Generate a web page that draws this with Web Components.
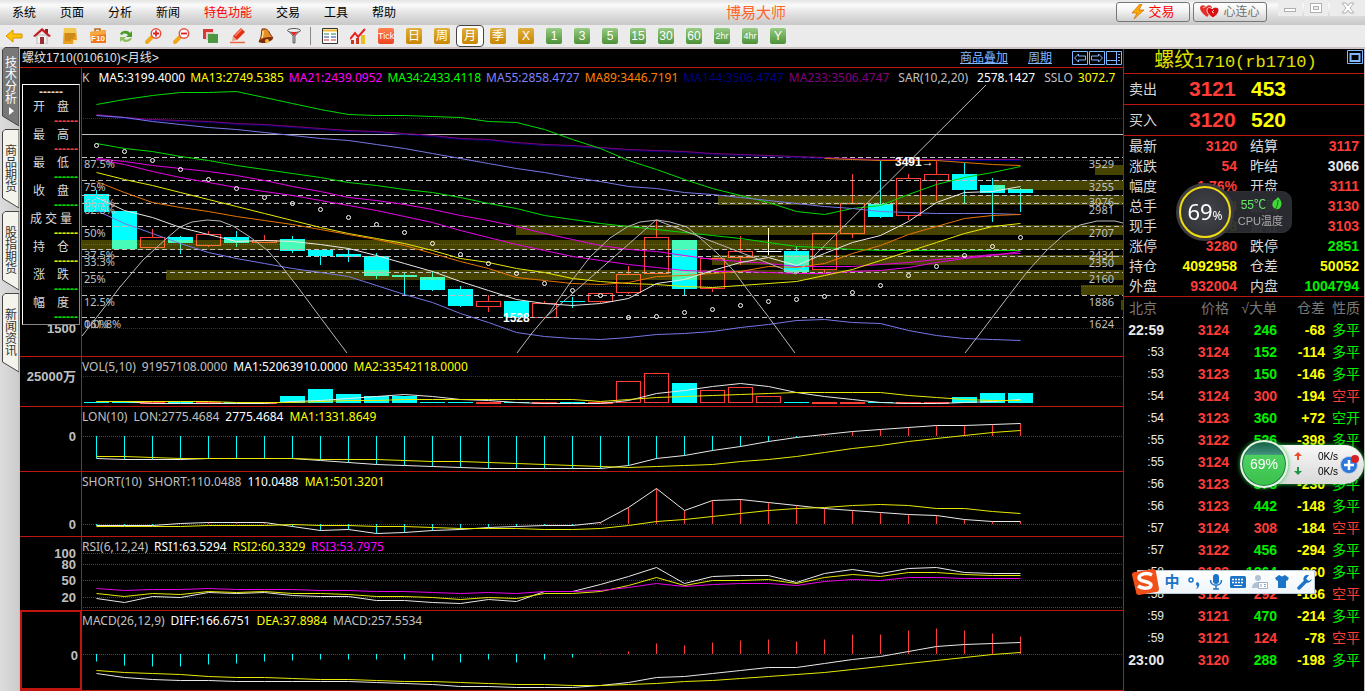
<!DOCTYPE html>
<html lang="zh-CN">
<head>
<meta charset="utf-8">
<title>博易大师</title>
<style>
  body {
    margin: 0;
    background: #000;
    font: 12px/16px "Liberation Sans", "Noto Sans CJK SC", sans-serif;
  }
</style>
</head>
<body>
<trade-app></trade-app>

<script>
const Color = {
  WHITE: "#e8e8e8",
  YELLOW: "#e8e800",
  MAGENTA: "#e800e8",
  GREEN: "#00dc00",
  VIOLET: "#7676e8",
  ORANGE: "#e87400",
  PURPLE: "#800080",
  NAVY: "#000080",
  UP: "#ff3c38",
  DOWN: "#00ffff",
  GRID: "#c01410",
  DIM_GRID: "#900c0c",
  LABEL: "#c0c0c0",
};

const BAR_STEP = 28;
const BAR_OFFSET = 14;
const BODY_WIDTH = 25;

const barX = (i) => BAR_OFFSET + i * BAR_STEP + 0.5;

const drawLine = (values, color, start = 0) => {
  const points = values.map((y, i) => `${barX(i + start)},${y + 0.5}`).join(" ");
  return `<polyline points="${points}" fill="none" stroke="${color}"/>`;
};

const drawPath = (points) =>
  `<polyline points="${points}" fill="none" stroke="#b8b8b8"/>`;

const drawDotted = (levels, color) =>
  levels
    .map(
      (y) =>
        `<line x1="1" x2="100%" y1="${y + 0.5}" y2="${y + 0.5}" stroke="${color}" stroke-dasharray="1 1"/>`
    )
    .join("");

const drawBody = (i, kind, top, bottom) => {
  const left = barX(i) - 12.5;
  if (kind === "d") {
    return `<rect x="${left}" y="${top}" width="${BODY_WIDTH}" height="${Math.max(bottom - top, 1)}" fill="${Color.DOWN}"/>`;
  }
  return `<rect x="${left + 0.5}" y="${top + 0.5}" width="${BODY_WIDTH - 1}" height="${Math.max(bottom - top - 1, 1)}" fill="none" stroke="${Color.UP}"/>`;
};

const drawWick = (i, kind, from, to) =>
  `<line x1="${barX(i)}" x2="${barX(i)}" y1="${from}" y2="${to}" stroke="${kind === "d" ? Color.DOWN : Color.UP}"/>`;

const drawCandle = ([kind, top, bottom, high, low], i) => {
  if (kind === "w") {
    return `<path d="M${barX(i) - 12} ${top + 0.5}h25M${barX(i)} ${high}V${low}" stroke="#fff"/>`;
  }
  return (
    drawWick(i, kind, high, top) +
    drawWick(i, kind, bottom, low) +
    drawBody(i, kind, top, bottom)
  );
};

// bars that hang from (or stand on) the zero line of a panel
const drawSticks = (values, zero) =>
  values
    .map((y, i) => drawWick(i, y > zero ? "d" : "u", zero, y + 0.5))
    .join("");

const CANDLES = [
  ["d", 126, 144, 122, 144], ["d", 143, 181, 143, 181], ["u", 169, 180, 161, 180],
  ["d", 169, 175, 168, 186], ["u", 166, 178, 163, 179], ["d", 169, 175, 163, 179],
  ["u", 172, 175, 167, 175], ["d", 171, 183, 168, 185], ["d", 182, 188, 182, 197],
  ["d", 186, 189, 180, 194], ["d", 188, 208, 185, 211], ["d", 207, 209, 205, 228],
  ["d", 209, 222, 203, 223], ["d", 221, 238, 218, 239], ["u", 233, 239, 227, 244],
  ["d", 233, 249, 233, 249], ["u", 235, 250, 233, 250], ["d", 233, 234, 229, 240],
  ["u", 225, 234, 225, 235], ["u", 206, 225, 198, 226], ["u", 169, 206, 152, 206],
  ["d", 172, 221, 172, 228], ["u", 190, 221, 190, 224], ["u", 183, 190, 168, 197],
  ["w", 183, 183, 160, 187], ["d", 183, 204, 178, 205], ["u", 165, 202, 165, 205],
  ["u", 135, 166, 106, 170], ["d", 136, 149, 92, 150], ["u", 110, 148, 106, 152],
  ["u", 106, 113, 92, 133], ["d", 106, 122, 95, 135], ["d", 117, 125, 110, 154],
  ["d", 121, 125, 120, 144],
];

const SAR = [
  77, 83, 92, 101, 111, 120, 129, 135, 141, 149, 156, 164, 175, 186, 195, 205, 215,
  222, 227, 249, 248, 244, 241, 237, 233, 231, 228, 224, 217, 207, 198, 187, 178, 169,
];

const MA_LONG = [
  46, 49, 51, 52, 53, 55, 56, 58, 60, 62, 63, 65, 67, 70, 71, 74, 76, 77, 79, 81, 82,
  83, 85, 86, 87, 88, 89, 90, 91, 91, 91, 91, 91, 91,
];

const MAIN_LINES = [
  [Color.NAVY, MA_LONG.map((y) => y + 1)],
  [Color.PURPLE, MA_LONG],
  [Color.GREEN, [36, 31, 27, 24, 24, 23, 29, 35, 41, 46, 47, 47, 48, 49, 53, 54, 61, 71, 80, 92, 101, 111, 120, 127, 134, 143, 146, 140, 137, 126, 116, 109, 104, 98]],
  [Color.VIOLET, [47, 49, 53, 56, 59, 61, 64, 67, 70, 72, 76, 80, 85, 90, 95, 100, 104, 109, 113, 118, 120, 124, 126, 129, 132, 135, 138, 140, 143, 144, 145, 145, 145, 146]],
  [Color.GREEN, [75, 80, 83, 88, 92, 97, 101, 105, 109, 114, 117, 121, 124, 129, 135, 140, 147, 151, 155, 158, 161, 164, 167, 170, 174, 178, 179, 181, 182, 182, 182, 182, 182, 182]],
  [Color.MAGENTA, [90, 93, 97, 100, 103, 107, 112, 118, 123, 129, 132, 136, 141, 147, 152, 158, 165, 171, 177, 181, 183, 187, 191, 193, 195, 198, 198, 198, 196, 194, 191, 189, 186, 185]],
  [Color.MAGENTA, [91, 96, 103, 109, 114, 119, 123, 127, 132, 137, 142, 148, 154, 162, 169, 176, 182, 188, 192, 196, 199, 202, 203, 203, 204, 205, 205, 203, 202, 199, 194, 190, 187, 183]],
  [Color.YELLOW, [104, 111, 117, 124, 131, 138, 145, 152, 159, 165, 170, 175, 182, 190, 194, 200, 204, 210, 213, 215, 216, 218, 219, 217, 215, 213, 207, 201, 192, 183, 174, 165, 158, 155]],
  [Color.ORANGE, [113, 124, 134, 139, 143, 148, 152, 156, 161, 166, 171, 177, 185, 193, 200, 209, 212, 215, 216, 214, 208, 207, 205, 203, 198, 199, 195, 185, 177, 166, 158, 150, 147, 146]],
  [Color.WHITE, [129, 142, 149, 159, 166, 173, 172, 173, 176, 180, 187, 195, 203, 213, 222, 231, 235, 237, 235, 230, 215, 211, 202, 194, 189, 197, 185, 174, 167, 153, 134, 124, 123, 118]],
  [Color.VIOLET, [142, 155, 165, 175, 184, 190, 195, 200, 204, 208, 217, 226, 234, 245, 254, 264, 268, 270, 271, 269, 266, 265, 263, 259, 256, 252, 251, 254, 255, 262, 267, 270, 271, 272]],
];

// [left, top, height] of the price density bands, each runs to the right edge
const BANDS = [
  [0, 172, 10], [84, 202, 10], [434, 157, 10], [636, 127, 10], [630, 187, 10],
  [911, 112, 10], [1013, 97, 10], [999, 217, 10], [1039, 232, 10],
];

const FIB_LEVELS = [89, 112, 127, 135, 158, 181, 188, 204, 227, 249];

const FIB_PERCENTS = [
  ["87.5%", 100], ["75%", 123], ["66.7%", 139], ["62.5%", 146], ["50%", 169],
  ["37.5%", 191], ["33.3%", 198], ["25%", 215], ["12.5%", 238], ["161.8%", 260], ["0.0%", 260],
];

const FIB_PRICES = [
  [3529, 100], [3255, 123], [3076, 138], [2981, 146], [2707, 169],
  [2434, 191], [2350, 199], [2160, 215], [1886, 238], [1624, 260],
];

const drawMain = () => {
  const bands = BANDS.map(
    ([x, y, h]) =>
      `<rect x="${x}" y="${y}" width="100%" height="${h}" fill="#fff000" fill-opacity="0.28"/>`
  ).join("");
  const levels = FIB_LEVELS.map(
    (y) =>
      `<line x1="0" x2="100%" y1="${y + 0.5}" y2="${y + 0.5}" stroke="#c0c0c0" stroke-dasharray="5 3"/>`
  ).join("");
  const dots = SAR.map(
    (y, i) => `<circle cx="${barX(i)}" cy="${y + 0.5}" r="2" fill="none" stroke="#fff"/>`
  ).join("");
  const percents = FIB_PERCENTS.map(([t, y]) => `<text x="2" y="${y}">${t}</text>`).join("");
  const prices = FIB_PRICES.map(([t, y]) => `<text x="1032" y="${y}" text-anchor="end">${t}</text>`).join("");

  return (
    drawDotted([50, 92, 134, 176, 218, 260], Color.DIM_GRID) +
    `<line x1="0" x2="100%" y1="66.5" y2="66.5" stroke="#c0c0c0"/>` +
    CANDLES.map(drawCandle).join("") +
    bands +
    levels +
    MAIN_LINES.map(([color, values]) => drawLine(values, color)).join("") +
    drawLine([90, 91, 92, 92, 92, 94, 96, 97], Color.ORANGE, 26) +
    dots +
    drawPath("0,268 18,245 38,219 61,192 85,170 98,159 110,154 125,152 138,153 151,158 168,169 185,182 201,200 218,222 238,249 265,285") +
    drawPath("435,285 450,265 468,244 488,215 508,189 528,170 545,159 558,154 575,152 588,154 605,159 618,170 635,185 651,202 665,221 685,247 713,285") +
    drawPath("883,285 903,259 925,230 945,204 965,182 985,164 998,157 1015,153 1033,153 1041,155") +
    drawPath("465,248 574,152 668,188 714,206 904,17") +
    `<g fill="${Color.LABEL}" font-size="11">${percents}${prices}</g>` +
    `<g class="mark"><text x="421" y="254">1528</text><text x="813" y="98">3491→</text></g>`
  );
};

const VOLUMES = [
  ["d", 45], ["d", 45], ["u", 45], ["d", 45], ["u", 45], ["d", 45], ["u", 45], ["d", 39],
  ["d", 32], ["d", 37], ["d", 39], ["d", 39], ["d", 45], ["d", 45], ["u", 45], ["d", 45],
  ["u", 45], ["d", 45], ["u", 45], ["u", 24], ["u", 16], ["d", 26], ["u", 33], ["u", 30],
  ["u", 39], ["d", 45], ["u", 45], ["u", 45], ["d", 45], ["u", 45], ["u", 45], ["d", 40],
  ["d", 36], ["d", 36],
];

const LON = [51, 52, 52, 52, 51, 51, 51, 51, 53, 55, 57, 58, 59, 60, 61, 61, 61, 61, 61, 58, 51, 48, 43, 39, 34, 30, 27, 24, 22, 20, 18, 18, 17, 16];
const SHORT = [53, 53, 53, 51, 50, 50, 50, 54, 58, 57, 61, 60, 58, 57, 55, 54, 53, 53, 50, 35, 16, 38, 28, 27, 30, 33, 36, 38, 40, 42, 43, 47, 49, 49];
const MACD = [50, 54, 55, 55, 53, 52, 50, 49, 48, 48, 48, 48, 49, 51, 48, 51, 48, 46, 42, 40, 32, 34, 31, 29, 28, 30, 28, 23, 23, 19, 17, 19, 22, 25];

const PLOTS = {
  main: { draw: drawMain, axis: [["1500", 265]] },
  vol: {
    axis: [["25000万", 24]],
    draw: () =>
      drawDotted([19], Color.DIM_GRID) +
      VOLUMES.map(([kind, top], i) => drawBody(i, kind, top, 46)).join("") +
      drawLine([44, 44, 46, 46, 46, 46, 46, 44, 43, 41, 39, 37, 39, 42, 43, 45, 46, 46, 46, 43, 36, 33, 29, 26, 29, 35, 39, 42, 45, 46, 46, 45, 44, 42], Color.WHITE) +
      drawLine([44, 44, 44, 44, 44, 45, 45, 45, 44, 43, 43, 42, 42, 42, 42, 42, 42, 42, 44, 42, 40, 39, 38, 37, 36, 35, 35, 35, 35, 38, 40, 42, 43, 43], Color.YELLOW),
  },
  lon: {
    axis: [["0", 34]],
    draw: () =>
      drawDotted([29], Color.GRID) +
      drawSticks(LON, 29) +
      drawLine(LON, Color.WHITE) +
      drawLine([49, 49, 50, 51, 51, 51, 51, 51, 52, 52, 52, 53, 54, 54, 55, 56, 57, 58, 59, 60, 59, 58, 57, 54, 52, 49, 45, 41, 38, 34, 31, 28, 25, 23], Color.YELLOW),
  },
  short: {
    axis: [["0", 57]],
    draw: () =>
      drawDotted([52], Color.GRID) +
      drawSticks(SHORT, 52) +
      drawLine(SHORT, Color.WHITE) +
      drawLine([54, 54, 54, 54, 53, 53, 53, 52, 53, 53, 54, 54, 55, 56, 56, 56, 57, 57, 56, 53, 49, 47, 44, 41, 38, 36, 35, 33, 32, 33, 36, 36, 39, 41], Color.YELLOW),
  },
  rsi: {
    axis: [["100", 21], ["80", 32], ["50", 48], ["20", 65]],
    draw: () =>
      drawDotted([16, 27, 43, 60, 70], Color.GRID) +
      drawLine([61, 65, 59, 60, 55, 56, 55, 58, 59, 59, 63, 63, 65, 66, 62, 64, 54, 54, 47, 39, 30, 46, 39, 38, 38, 45, 36, 32, 36, 31, 30, 35, 36, 36], Color.WHITE) +
      drawLine([56, 59, 56, 57, 54, 55, 54, 56, 56, 57, 59, 59, 60, 62, 60, 61, 56, 56, 54, 48, 40, 48, 43, 43, 42, 46, 40, 37, 39, 35, 35, 37, 38, 38], Color.YELLOW) +
      drawLine([51, 53, 52, 52, 51, 52, 52, 52, 53, 53, 54, 54, 55, 56, 55, 56, 54, 54, 53, 50, 46, 49, 47, 46, 46, 48, 44, 42, 43, 40, 40, 41, 41, 41], Color.MAGENTA),
  },
  macd: {
    axis: [["0", 48]],
    draw: () =>
      drawDotted([43], Color.GRID) +
      drawSticks(MACD, 43) +
      drawLine([62, 66, 68, 69, 69, 70, 70, 70, 70, 70, 71, 72, 73, 75, 75, 76, 76, 76, 74, 71, 66, 65, 62, 59, 56, 56, 52, 48, 45, 40, 35, 33, 32, 31], Color.WHITE) +
      drawLine([59, 61, 62, 63, 65, 66, 66, 67, 68, 68, 69, 70, 70, 71, 72, 73, 73, 74, 74, 73, 72, 70, 69, 67, 65, 63, 61, 58, 55, 52, 49, 46, 43, 41], Color.YELLOW),
  },
};

const define = (name, template, setup = () => {}) => {
  customElements.define(
    name,
    class extends HTMLElement {
      constructor() {
        super();
        this.attachShadow({ mode: "open" });
        this.shadowRoot.innerHTML = template;
      }

      connectedCallback() {
        setup(this, this.shadowRoot);
      }
    }
  );
};

/* ---------- menu bar ---------- */

define(
  "menu-bar",
  `
<style>
  :host {
    display: grid;
    grid-template-columns: auto 1fr auto;
    align-items: center;
    height: 25px;
    background: linear-gradient(#e4e4e4, #fafafa 20%, #dedede 60%, #c8c8c8);
  }
  nav { display: flex; gap: 24px; padding-left: 12px; }
  a { color: #000; text-decoration: none; }
  a.hot { color: #f00; }
  h1 { margin: 0; text-align: center; font-size: 15px; font-weight: 400; color: #ff6428; }
  .right { display: flex; gap: 3px; height: 25px; }
  button { font: inherit; padding: 0; cursor: pointer; }
  .pill {
    display: flex; align-items: center; justify-content: center; gap: 3px;
    width: 74px; height: 20px; margin-top: 2px;
    border: 1px solid #777; border-radius: 3px;
    background: linear-gradient(#fff, #f2f2f2 45%, #d0d0d0);
    color: #707070;
  }
  .pill.trade { color: #f00; font-size: 13px; }
  .win { display: flex; margin-left: 8px; gap: 2px; }
  .win button { width: 24px; height: 16px; border: 0; background: #ececec; }
  .win button:last-child { width: 35px; }
  .win svg { display: block; margin: auto; }
</style>
<nav>
  <a href="#">系统</a><a href="#">页面</a><a href="#">分析</a><a href="#">新闻</a>
  <a href="#" class="hot">特色功能</a><a href="#">交易</a><a href="#">工具</a><a href="#">帮助</a>
</nav>
<h1>博易大师</h1>
<div class="right">
  <button class="pill trade">
    <svg width="14" height="16" viewBox="0 0 14 16"><path d="M9 0 1 9h5l-3 6 10-9H8l3-6z" fill="#ffa800" stroke="#c46a00" stroke-width=".7"/></svg>交易
  </button>
  <button class="pill">
    <svg width="20" height="16" viewBox="0 0 20 16"><path d="M7 13C3 10 0 7 0 4s4-4 6-1c2-3 6-2 6 1s-2 6-5 9z" fill="#e43028"/><path d="M13 14c-4-3-6-5-6-8s4-3 5-1c2-3 7-2 7 1s-3 6-6 8z" fill="#d80e14" stroke="#fff" stroke-width=".8"/><path d="M3 4c1-2 2-1 2 0M14 6l-2 2 2 1" fill="none" stroke="#ffc8c0"/></svg>心连心
  </button>
  <div class="win">
    <button aria-label="最小化"><svg width="14" height="14"><rect x="1.5" y="7.5" width="11" height="3" fill="#fff" stroke="#b0b0b0"/></svg></button>
    <button aria-label="最大化"><svg width="14" height="14"><rect x="1.5" y="2.5" width="11" height="9" fill="#fff" stroke="#b0b0b0"/><rect x="4.5" y="5.5" width="5" height="3" fill="#eee" stroke="#b0b0b0"/></svg></button>
    <button aria-label="关闭"><svg width="14" height="14"><path d="M1 2h4l2 3 2-3h4L9 7l4 5H9L7 9l-2 3H1l4-5z" fill="#fff" stroke="#b0b0b0"/></svg></button>
  </div>
</div>
`
);

/* ---------- toolbar ---------- */

define(
  "tool-button",
  `
<style>
  :host { display: block; width: 28px; height: 22px; }
  button {
    display: grid; place-items: center;
    width: 100%; height: 100%; padding: 0;
    border: 0; background: none; font: inherit; cursor: pointer;
  }
  :host([selected]) button {
    border: 1px solid #444; border-radius: 4px; background: #fff;
  }
</style>
<button><slot></slot></button>
`,
  (host, root) => {
    const label = host.getAttribute("label");
    if (label) {
      root.querySelector("button").setAttribute("aria-label", label);
    }
  }
);

define(
  "period-badge",
  `
<style>
  :host {
    display: grid; place-items: center;
    width: 16px; height: 16px; border-radius: 2px; overflow: hidden;
    font-size: 12px; line-height: 16px; color: #fff;
    background: linear-gradient(#e0b040, #c88600);
  }
  :host([tone="green"]) { background: linear-gradient(#98cc84, #4c9038); }
  :host([tone="red"]) { background: linear-gradient(#ff8050, #ec4420); }
  :host([wide]) { font-size: 9px; }
</style>
<slot></slot>
`
);

define(
  "tool-bar",
  `
<style>
  :host {
    display: flex; align-items: center;
    height: 22px; background: #ebebeb; border-bottom: 2px solid #ccc4c4;
  }
  hr { width: 1px; height: 18px; margin: 0 5px 0 2px; border: 0; background: #888; }
  svg { display: block; }
</style>
<tool-button label="后退"><svg width="18" height="16" viewBox="0 0 18 16"><path d="M1 8 8 2v4h9v4H8v4z" fill="#ffc40a" stroke="#d89000"/></svg></tool-button>
<tool-button label="首页"><svg width="18" height="16" viewBox="0 0 18 16"><path d="M4 7h10v9H4z" fill="#f4f0f0" stroke="#999" stroke-width=".6"/><path d="M12 1h3v5h-3z" fill="#902020"/><path d="M0 8 9 0l9 8-2 1-7-6-7 6z" fill="#c41a20"/><path d="M7 9h4v7H7z" fill="#983038"/></svg></tool-button>
<tool-button label="资讯"><svg width="16" height="16" viewBox="0 0 16 16"><path d="M2 0h12l1 12-4 4H1z" fill="#e8a020"/><path d="M2 0h12v5H2z" fill="#f4c850"/><path d="M3 6h10M3 8h10M3 10h9M3 12h6" stroke="#a86810" stroke-width=".8"/><path d="m11 16 .5-4H15z" fill="#fff0b0"/></svg></tool-button>
<tool-button label="F10"><svg width="18" height="16" viewBox="0 0 18 16"><path d="M6 3V1h5v2" fill="none" stroke="#b86a10" stroke-width="1.5"/><path d="M1 4 17 2v13H2z" fill="#f07818"/><path d="M1 4 17 2v4L1 8z" fill="#f8a840"/><text x="9" y="13" text-anchor="middle" font-size="8" font-weight="700" fill="#fff">F10</text></svg></tool-button>
<tool-button label="刷新"><svg width="16" height="16" viewBox="0 0 16 16"><path d="M2 6c2-4 8-4 10-1l2-2v6H8l2-2C8 5 5 5 4 7z" fill="#4a9a28"/><path d="M14 10c-2 5-8 5-10 2l-2 2V9h6l-2 2c2 1 4 1 6-1z" fill="#8cc05c"/></svg></tool-button>
<tool-button label="放大"><svg width="18" height="16" viewBox="0 0 18 16"><path d="m2 14 5-5" stroke="#f0a818" stroke-width="4" stroke-linecap="round"/><circle cx="11" cy="5.5" r="4.7" fill="#fff" stroke="#e05040" stroke-width="1.5"/><path d="M8 5.5h6M11 2.5v6" stroke="#e02020" stroke-width="1.8"/></svg></tool-button>
<tool-button label="缩小"><svg width="18" height="16" viewBox="0 0 18 16"><path d="m2 14 5-5" stroke="#f0a818" stroke-width="4" stroke-linecap="round"/><circle cx="11" cy="5.5" r="4.7" fill="#fff" stroke="#e05040" stroke-width="1.5"/><path d="M8 5.5h6" stroke="#e02020" stroke-width="1.8"/></svg></tool-button>
<tool-button label="叠加"><svg width="16" height="16" viewBox="0 0 16 16"><path d="M1 1h10v10H1z" fill="#d83838"/><path d="M4 4h8v8H4z" fill="#e8c8c0"/><path d="M6 6h10v9H6z" fill="#4c9840"/></svg></tool-button>
<tool-button label="画线"><svg width="16" height="16" viewBox="0 0 16 16"><path d="M0 14.5h15" stroke="#e86848" stroke-width="1.5"/><path d="m2 13 1-5 4 4z" fill="#e0a878"/><path d="m3 8 8-8 4 4-8 8z" fill="#e03018"/><path d="m5 8 7-7" stroke="#ff8860" stroke-width="1.5"/></svg></tool-button>
<tool-button label="预警"><svg width="16" height="16" viewBox="0 0 16 16"><path d="M4 1c5-1 7 2 8 5l3 4-14 4 2-5z" fill="#e89028" stroke="#7c2c08"/><ellipse cx="8" cy="12" rx="7" ry="2.5" fill="#7c2c08" transform="rotate(-14 8 12)"/><circle cx="9" cy="13" r="2" fill="#f8b838"/><path d="M5 3c0 3 0 5-1 7" fill="none" stroke="#ffe090" stroke-width="1.5"/></svg></tool-button>
<tool-button label="筛选"><svg width="16" height="16" viewBox="0 0 16 16"><path d="M2 2h12l-5 6v7H7V8z" fill="#b4b4b4" stroke="#666"/><ellipse cx="8" cy="2.5" rx="6.5" ry="2" fill="#eee" stroke="#555"/><path d="M5 4h6L8 8z" fill="#f02020"/></svg></tool-button>
<hr>
<tool-button label="报价"><svg width="16" height="16" viewBox="0 0 16 16"><path d="M.5.5h15v15H.5z" fill="#fff" stroke="#333"/><path d="M1 2.5h14" stroke="#f0b830" stroke-width="2"/><path d="M2 6h5M9 6h5" stroke="#285"/><path d="M2 9h5M9 9h5" stroke="#24a"/><path d="M2 12h5M9 12h5" stroke="#c33"/></svg></tool-button>
<tool-button label="分时"><svg width="16" height="16" viewBox="0 0 16 16"><path d="M1 12h3v4H1zM6 10h3v6H6z" fill="#c83820"/><path d="M11 7h4v9h-4z" fill="#e8c020"/><path d="m0 11 5-6 3 4 7-8" fill="none" stroke="#e82020" stroke-width="2"/></svg></tool-button>
<tool-button><period-badge tone="red" wide>Tick</period-badge></tool-button>
<tool-button><period-badge>日</period-badge></tool-button>
<tool-button><period-badge>周</period-badge></tool-button>
<tool-button selected><period-badge>月</period-badge></tool-button>
<tool-button><period-badge>季</period-badge></tool-button>
<tool-button><period-badge>X</period-badge></tool-button>
<tool-button><period-badge tone="green">1</period-badge></tool-button>
<tool-button><period-badge tone="green">3</period-badge></tool-button>
<tool-button><period-badge tone="green">5</period-badge></tool-button>
<tool-button><period-badge tone="green">15</period-badge></tool-button>
<tool-button><period-badge tone="green">30</period-badge></tool-button>
<tool-button><period-badge tone="green">60</period-badge></tool-button>
<tool-button><period-badge tone="green" wide>2hr</period-badge></tool-button>
<tool-button><period-badge tone="green" wide>4hr</period-badge></tool-button>
<tool-button><period-badge tone="green">Y</period-badge></tool-button>
`
);

/* ---------- left rail ---------- */

define(
  "side-tab",
  `
<style>
  :host { display: block; color: #333; --face: #f4f4ec; --edge: #444; }
  :host([active]) { color: #fff; --face: #787878; }
  button {
    display: grid; width: 17px; height: 80px; padding: 0;
    border: 0; background: none; color: inherit; cursor: pointer;
    font: 12px/16px "Noto Sans CJK SC", sans-serif;
  }
  svg, span { grid-area: 1 / 1; }
  path { fill: var(--face); stroke: var(--edge); }
  span { writing-mode: vertical-rl; text-orientation: upright; padding-bottom: 2px; place-self: center; }
</style>
<button>
  <svg width="17" height="80"><path d="M17 .5H3L.5 3v66L17 79z"/></svg>
  <span><slot></slot></span>
</button>
`
);

define(
  "side-rail",
  `
<style>
  :host {
    display: flex; flex-direction: column; gap: 2px; margin-top: -2px;
    padding-left: 2px; background: linear-gradient(90deg, #dcdcdc, #ccc);
    border-right: 1px solid #c8c0c0; box-sizing: border-box;
  }
  svg { display: inline-block; }
</style>
<side-tab active>技术分析<svg width="12" height="12"><path d="M4 3v8l5-4z" fill="#fff"/></svg></side-tab>
<side-tab>商品期货</side-tab>
<side-tab>股指期货</side-tab>
<side-tab>新闻资讯</side-tab>
`
);

/* ---------- chart ---------- */

define(
  "bar-info",
  `
<style>
  :host {
    display: block; box-sizing: border-box; height: 241px; margin: 16px 1px 0 2px;
    border: 1px solid #fff; border-right-color: #888; border-bottom-color: #888;
    background: #000; color: #d8d8d8;
  }
  dl { margin: 0; line-height: 14px; }
  dt { display: flex; justify-content: center; gap: 12px; }
  dt.tight { gap: 3px; }
  dd { margin: 0; padding-right: 1px; text-align: right; font-weight: 700; }
  .first { text-align: center; line-height: 15px; font-weight: 700; }
  .u { color: #ff3c38; } .d { color: #00e000; } .y { color: #e8e800; }
</style>
<div class="first">------</div>
<dl></dl>
`,
  (host, root) => {
    const rows = [
      ["开盘", "u"], ["最高", "u"], ["最低", "d"], ["收盘", "d"],
      ["成交量", "y"], ["持仓", "y"], ["涨跌", "d"], ["幅度", "d"],
    ];
    root.querySelector("dl").innerHTML = rows
      .map(([name, tone]) => {
        const chars = [...name].map((c) => `<span>${c}</span>`).join("");
        return `<dt class="${name.length > 2 ? "tight" : ""}">${chars}</dt><dd class="${tone}">------</dd>`;
      })
      .join("");
  }
);

define(
  "chart-panel",
  `
<style>
  :host {
    display: grid; grid-template-columns: 62px minmax(0, 1fr);
    border-bottom: 1px solid #c01410; box-sizing: border-box; min-height: 0;
  }
  .axis { display: grid; border-right: 1px solid #c01410; min-height: 0; }
  :host([active]) .axis { border: 2px solid #c01410; margin-top: -1px; }
  .axis svg, .axis slot { grid-area: 1 / 1; display: block; width: 100%; }
  .axis svg { height: 100%; font-size: 13px; font-weight: 700; fill: #c0c0c0; }
  .plot { display: grid; min-width: 0; min-height: 0; overflow: hidden; }
  .plot > * { grid-area: 1 / 1; }
  .plot svg { width: 100%; height: 100%; overflow: hidden; font-family: "Noto Sans", sans-serif; }
  .mark { fill: #fff; font: 700 12px "Liberation Sans", sans-serif; }
  .legend {
    display: flex; gap: 6px; height: 20px; overflow: hidden; align-self: start;
    font-family: "Noto Sans", "Noto Sans CJK SC", sans-serif; line-height: 20px; white-space: nowrap; color: #c0c0c0;
  }
  :host([plot="main"]) .legend { gap: 5px; }
</style>
<div class="axis"><svg></svg><slot name="info"></slot></div>
<div class="plot"><svg></svg><div class="legend"><slot></slot></div></div>
`,
  (host, root) => {
    const plot = PLOTS[host.getAttribute("plot")];
    root.querySelector(".plot svg").innerHTML = plot.draw();
    root.querySelector(".axis svg").innerHTML = plot.axis
      .map(([text, y]) => `<text x="56" y="${y}" text-anchor="end">${text}</text>`)
      .join("");
  }
);

define(
  "chart-area",
  `
<style>
  :host {
    display: grid; min-width: 0; background: #000;
    grid-template-rows: 19px minmax(0, 1fr) 50px 65px 65px 74px 80px;
    border-right: 1px solid #c01410; box-sizing: border-box;
  }
  header {
    display: flex; align-items: center; gap: 20px; padding: 0 1px 0 2px;
    border-bottom: 1px solid #c01410; color: #e0e0e0;
  }
  header span { flex: 1; }
  header a { color: #80b8ff; }
  .icons { display: flex; gap: 1px; }
  .icons button { padding: 0; border: 0; background: none; cursor: pointer; }
  svg { display: block; fill: none; stroke: #80b8ff; }
  .w { color: #fff; } .y { color: #ffff00; } .m { color: #ff00ff; } .g { color: #00ff00; }
  .v { color: #8080ff; } .o { color: #ff8000; } .n { color: #000080; } .p { color: #800080; }
  .lead, .next { margin-right: 4px; }
</style>
<header>
  <span>螺纹1710(010610)&lt;月线&gt;</span>
  <a href="#">商品叠加</a>
  <a href="#">周期</a>
  <div class="icons">
    <button aria-label="前移"><svg width="16" height="14"><path d="M.5.5h15v13H.5zM2.5 7l4-4v2h7v4h-7v2z"/></svg></button>
    <button aria-label="后移"><svg width="16" height="14"><path d="M.5.5h15v13H.5zM13.5 7l-4-4v2h-7v4h7v2z"/></svg></button>
    <button aria-label="布局"><svg width="16" height="14"><path d="M.5.5h15v13H.5zM.5 9.5h10M10.5 1v13M12 3.5h2M12 6.5h2M12 9.5h2"/></svg></button>
  </div>
</header>
<chart-panel plot="main">
  <bar-info slot="info"></bar-info>
  <span class="lead">K</span><span class="w">MA5:3199.4000</span><span class="y">MA13:2749.5385</span>
  <span class="m">MA21:2439.0952</span><span class="g">MA34:2433.4118</span><span class="v">MA55:2858.4727</span>
  <span class="o">MA89:3446.7191</span><span class="n">MA144:3506.4747</span><span class="p next">MA233:3506.4747</span>
  <span class="next">SAR(10,2,20)</span><span class="w next">2578.1427</span><span>SSLO</span><span class="y">3072.7</span>
</chart-panel>
<chart-panel plot="vol">
  <span>VOL(5,10)</span><span>91957108.0000</span><span class="w">MA1:52063910.0000</span><span class="y">MA2:33542118.0000</span>
</chart-panel>
<chart-panel plot="lon">
  <span>LON(10)</span><span>LON:2775.4684</span><span class="w">2775.4684</span><span class="y">MA1:1331.8649</span>
</chart-panel>
<chart-panel plot="short">
  <span>SHORT(10)</span><span>SHORT:110.0488</span><span class="w">110.0488</span><span class="y">MA1:501.3201</span>
</chart-panel>
<chart-panel plot="rsi">
  <span>RSI(6,12,24)</span><span class="w">RSI1:63.5294</span><span class="y">RSI2:60.3329</span><span class="m">RSI3:53.7975</span>
</chart-panel>
<chart-panel plot="macd" active>
  <span>MACD(26,12,9)</span><span class="w">DIFF:166.6751</span><span class="y">DEA:37.8984</span><span>MACD:257.5534</span>
</chart-panel>
`
);

/* ---------- quote panel ---------- */

const TONE_STYLE = `.u { color: #ff3c38; } .d { color: #00f000; } .y { color: #ffff00; } .w { color: #e8e8e8; }`;

define(
  "quote-table",
  `
<style>
  :host { display: block; border-bottom: 1px solid #c01410; }
  table { width: 100%; table-layout: fixed; border-collapse: collapse; font-size: 14px; line-height: 20px; }
  th, td { padding: 0; height: 20px; }
  th { text-align: left; font-weight: 400; color: #d8d8d8; padding-left: 5px; }
  th ~ th { padding-left: 13px; }
  td { text-align: right; font-weight: 700; }
  td:last-child { padding-right: 5px; }
  ${TONE_STYLE}
</style>
<table>
  <colgroup><col style="width:40px"><col style="width:73px"><col style="width:43px"><col></colgroup>
  <tbody></tbody>
</table>
`,
  (host, root) => {
    const rows = [
      ["最新", "3120", "u", "结算", "3117", "u"],
      ["涨跌", "54", "u", "昨结", "3066", "w"],
      ["幅度", "1.76%", "u", "开盘", "3111", "u"],
      ["总手", "1936798", "y", "最高", "3130", "u"],
      ["现手", "288", "y", "最低", "3103", "u"],
      ["涨停", "3280", "u", "跌停", "2851", "d"],
      ["持仓", "4092958", "y", "仓差", "50052", "y"],
      ["外盘", "932004", "u", "内盘", "1004794", "d"],
    ];
    root.querySelector("tbody").innerHTML = rows
      .map(
        ([a, av, at, b, bv, bt]) =>
          `<tr><th scope="row">${a}</th><td class="${at}">${av}</td><th scope="row">${b}</th><td class="${bt}">${bv}</td></tr>`
      )
      .join("");
  }
);

define(
  "tick-table",
  `
<style>
  :host { display: block; }
  table { width: 100%; table-layout: fixed; border-collapse: collapse; font-size: 14px; line-height: 22px; }
  th, td { height: 22px; padding: 0; text-align: right; white-space: nowrap; }
  th { font-weight: 400; color: #787878; }
  th:first-child { text-align: left; padding-left: 5px; }
  th:last-child, td:last-child { padding-right: 4px; }
  td { font-weight: 700; color: #ffff00; }
  td:first-child { color: #e8e8e8; }
  td.sec { font-weight: 400; font-size: 12px; }
  td:last-child { font-weight: 400; }
  td.u { color: #ff3c38; } td.d { color: #00f000; }
</style>
<table>
  <colgroup><col style="width:40px"><col style="width:65px"><col style="width:48px"><col style="width:48px"><col></colgroup>
  <thead><tr><th>北京</th><th>价格</th><th>√大单</th><th>仓差</th><th>性质</th></tr></thead>
  <tbody></tbody>
</table>
`,
  (host, root) => {
    const rows = [
      ["22:59", 3124, 246, "-68", "多平", "d"],
      [":53", 3124, 152, "-114", "多平", "d"],
      [":53", 3123, 150, "-146", "多平", "d"],
      [":54", 3124, 300, "-194", "空平", "u"],
      [":54", 3123, 360, "+72", "空开", "d"],
      [":55", 3122, 526, "-398", "多平", "d"],
      [":55", 3124, 266, "-120", "空平", "u"],
      [":56", 3123, 378, "-230", "多平", "d"],
      [":56", 3123, 442, "-148", "多平", "d"],
      [":57", 3124, 308, "-184", "空平", "u"],
      [":57", 3122, 456, "-294", "多平", "d"],
      [":58", 3123, 1264, "-860", "多平", "d"],
      [":58", 3122, 292, "-186", "空平", "u"],
      [":59", 3121, 470, "-214", "多平", "d"],
      [":59", 3121, 124, "-78", "空平", "u"],
      ["23:00", 3120, 288, "-198", "多平", "d"],
    ];
    root.querySelector("tbody").innerHTML = rows
      .map(
        ([time, price, size, diff, kind, tone]) =>
          `<tr><td class="${time[0] === ":" ? "sec" : ""}">${time}</td><td class="u">${price}</td>` +
          `<td class="${tone}">${size}</td><td>${diff}</td><td class="${tone}">${kind}</td></tr>`
      )
      .join("");
  }
);

define(
  "quote-panel",
  `
<style>
  :host { display: block; background: #000; border-right: 1px solid #c8c0c0; box-sizing: border-box; overflow: hidden; }
  header {
    display: flex; align-items: center; height: 24px; border-bottom: 1px solid #c01410; padding-right: 1px;
  }
  h2 { flex: 1; margin: 0; text-align: center; font-size: 20px; line-height: 24px; font-weight: 400; color: #e0e000; }
  h2 span { font-family: "Liberation Mono", monospace; font-size: 17px; }
  header button { align-self: flex-start; margin-top: 1px; padding: 0; border: 0; background: none; }
  header svg { display: block; fill: none; stroke: #80b8ff; }
  .book {
    display: grid; grid-template-columns: 65px 62px 1fr; align-items: center;
    height: 30px; border-bottom: 1px solid #c01410; color: #d8d8d8; font-size: 14px;
  }
  .book > :first-child { padding-left: 5px; }
  b { font-size: 21px; }
  ${TONE_STYLE}
</style>
<header>
  <h2>螺纹<span>1710(rb1710)</span></h2>
  <button aria-label="窗口"><svg width="16" height="14"><path d="M.5.5h15v13H.5z"/><path d="M3.5 4h9v7h-9z" stroke-width="2"/></svg></button>
</header>
<div class="book"><span>卖出</span><b class="u">3121</b><b class="y">453</b></div>
<div class="book"><span>买入</span><b class="u">3120</b><b class="y">520</b></div>
<quote-table></quote-table>
<tick-table></tick-table>
`
);

/* ---------- floating desktop widgets ---------- */

define(
  "cpu-gauge",
  `
<style>
  :host { position: fixed; top: 183px; right: 73px; display: flex; align-items: center; }
  .dial {
    display: grid; place-items: center; position: relative; z-index: 1;
    box-sizing: border-box; width: 58px; height: 58px; border-radius: 50%;
    background: #34343a; border: 3px solid #3c3c40;
  }
  .ring {
    box-sizing: border-box; width: 52px; height: 52px; border: 2px solid #f0dc10; border-radius: 50%;
    font: 22px/46px "Noto Sans", sans-serif; text-align: center; color: #fff;
    background: radial-gradient(#44464c, #2c2d32);
  }
  .ring small { font-size: 12px; }
  .info {
    box-sizing: border-box; height: 42px; width: 86px; margin-left: -28px; padding: 5px 8px 0 0;
    border-radius: 10px; background: rgba(44, 45, 50, .94); border: 1px solid #303034;
    text-align: right; font-size: 11px; line-height: 16px; color: #a8a8a8;
  }
  .temp { display: flex; justify-content: flex-end; gap: 5px; font-size: 12px; color: #68e868; }
</style>
<div class="dial"><div class="ring">69<small>%</small></div></div>
<div class="info">
  <div class="temp">55℃<svg width="12" height="14" viewBox="0 0 12 14"><path d="M7 0c4 4 5 8 1 12-5 1-8-3-6-7 1-2 3-2 5-5z" fill="#40d838"/><path d="M7 3c0 4-1 7-3 10" fill="none" stroke="#106818"/></svg></div>
  CPU温度
</div>
`
);

define(
  "net-meter",
  `
<style>
  :host { position: fixed; top: 440px; right: 1px; display: flex; align-items: center; }
  .ball {
    display: grid; place-items: center; position: relative; z-index: 1;
    box-sizing: border-box; width: 48px; height: 48px; border-radius: 50%; border: 2px solid #e8f4e8;
    background: linear-gradient(#186048, #40907c 28%, #4cd060 30%, #3cc04c);
    box-shadow: inset 0 0 0 1px #1c7848, 0 0 4px #20c840;
    font: 14px/20px "Liberation Sans", sans-serif; color: #fff;
  }
  .pill {
    display: grid; grid-template-columns: 10px 34px 24px; align-items: center;
    box-sizing: border-box; width: 102px; height: 39px; margin-left: -26px; padding: 4px 2px 4px 32px;
    border-radius: 0 20px 20px 0; background: linear-gradient(#f8f8f8, #d8d8d8);
    box-shadow: 0 0 4px #20c840; font-size: 10px; line-height: 15px; color: #000;
  }
  .pill span { text-align: right; }
  svg { display: block; }
  .plus { grid-area: 1 / 3 / 3 / 4; padding: 0; border: 0; background: none; }
</style>
<div class="ball">69%</div>
<div class="pill">
  <svg width="8" height="9"><path d="M4 0 0 4h3v4h2V4h3z" fill="#e85030"/></svg><span>0K/s</span>
  <svg width="8" height="9"><path d="M4 8 0 4h3V0h2v4h3z" fill="#189848"/></svg><span>0K/s</span>
  <button class="plus" aria-label="加速"><svg width="22" height="24"><circle cx="11" cy="13" r="9" fill="#b8c8e0"/><circle cx="11" cy="13" r="8" fill="#2c78d8"/><path d="M11 8v10M6 13h10" stroke="#fff" stroke-width="2.5"/><circle cx="17" cy="7" r="4" fill="#d82020"/></svg></button>
</div>
`
);

define(
  "ime-bar",
  `
<style>
  :host { position: fixed; top: 568px; right: 50px; display: flex; align-items: center; }
  .logo { position: relative; z-index: 1; margin-right: -22px; }
  .bar {
    display: flex; align-items: center; gap: 6px; box-sizing: border-box; width: 178px; height: 24px;
    padding-left: 26px; background: linear-gradient(#fff, #eef4fa); border: 1px solid #b8ccdc;
    color: #1c74c8; font-size: 15px; font-weight: 700;
  }
  button { display: grid; place-items: center; width: 16px; height: 20px; padding: 0; border: 0; background: none; color: inherit; font: inherit; }
  svg { display: block; }
</style>
<svg class="logo" width="28" height="28" viewBox="0 0 28 28"><path d="m4 4 18-3q3 0 3 3l3 17q0 3-3 3L8 27q-3 0-3-3L1 7q0-3 3-3z" fill="#f05018"/><path d="M21 7c-5-3-13-1-13 3s12 3 12 7-9 4-13 1" fill="none" stroke="#fff" stroke-width="3.5"/></svg>
<div class="bar">
  <button>中</button>
  <button aria-label="标点"><svg width="14" height="16"><circle cx="4" cy="6" r="2" fill="none" stroke="#1c74c8" stroke-width="1.5"/><path d="M10 8q4 1 1 6l-2 1q2-3 1-3-2-2 0-4z" fill="#1c74c8"/></svg></button>
  <button aria-label="语音"><svg width="14" height="16"><rect x="4" y="0" width="6" height="10" rx="3" fill="#1c74c8"/><path d="M1.5 6c0 7 11 7 11 0M7 11v4M4 15h6" fill="none" stroke="#1c74c8" stroke-width="1.5"/></svg></button>
  <button aria-label="键盘"><svg width="16" height="12"><rect width="16" height="12" rx="1.5" fill="#1c74c8"/><path d="M2 3.5h12M2 6.5h12" stroke="#fff" stroke-width="1.5" stroke-dasharray="2 1"/><path d="M4 9.5h8" stroke="#fff"/></svg></button>
  <button aria-label="账户"><svg width="16" height="16"><circle cx="6" cy="4" r="3" fill="#b4c0d4"/><path d="M0 14c0-8 12-8 12 0z" fill="#b4c0d4"/><path d="M6.5 8.5h9v6h-9z" fill="#fff" stroke="#a0b0c8"/><path d="M9 10v3M12 10.5h2M12 12.5h2" stroke="#90a0bc"/></svg></button>
  <button aria-label="皮肤"><svg width="14" height="14"><path d="m4 0 3 1.5L10 0l4 3-2 3-1-.5V13H3V5.5L2 6 0 3z" fill="#1c74c8"/></svg></button>
  <button aria-label="工具"><svg width="15" height="15"><path d="M2 13 9 6" stroke="#1c74c8" stroke-width="3.5" stroke-linecap="round"/><path d="M12 0c-4-1-7 3-5 6s7 2 8-2l-3 2-3-2z" fill="#1c74c8"/></svg></button>
</div>
`
);

/* ---------- app ---------- */

define(
  "trade-app",
  `
<style>
  :host { display: flex; flex-direction: column; min-height: 100vh; }
  main { flex: 1; display: grid; grid-template-columns: 20px minmax(0, 1fr) 241px; }
</style>
<menu-bar></menu-bar>
<tool-bar></tool-bar>
<main>
  <side-rail></side-rail>
  <chart-area></chart-area>
  <quote-panel></quote-panel>
</main>
<cpu-gauge></cpu-gauge>
<net-meter></net-meter>
<ime-bar></ime-bar>
`
);
</script>
</body>
</html>
